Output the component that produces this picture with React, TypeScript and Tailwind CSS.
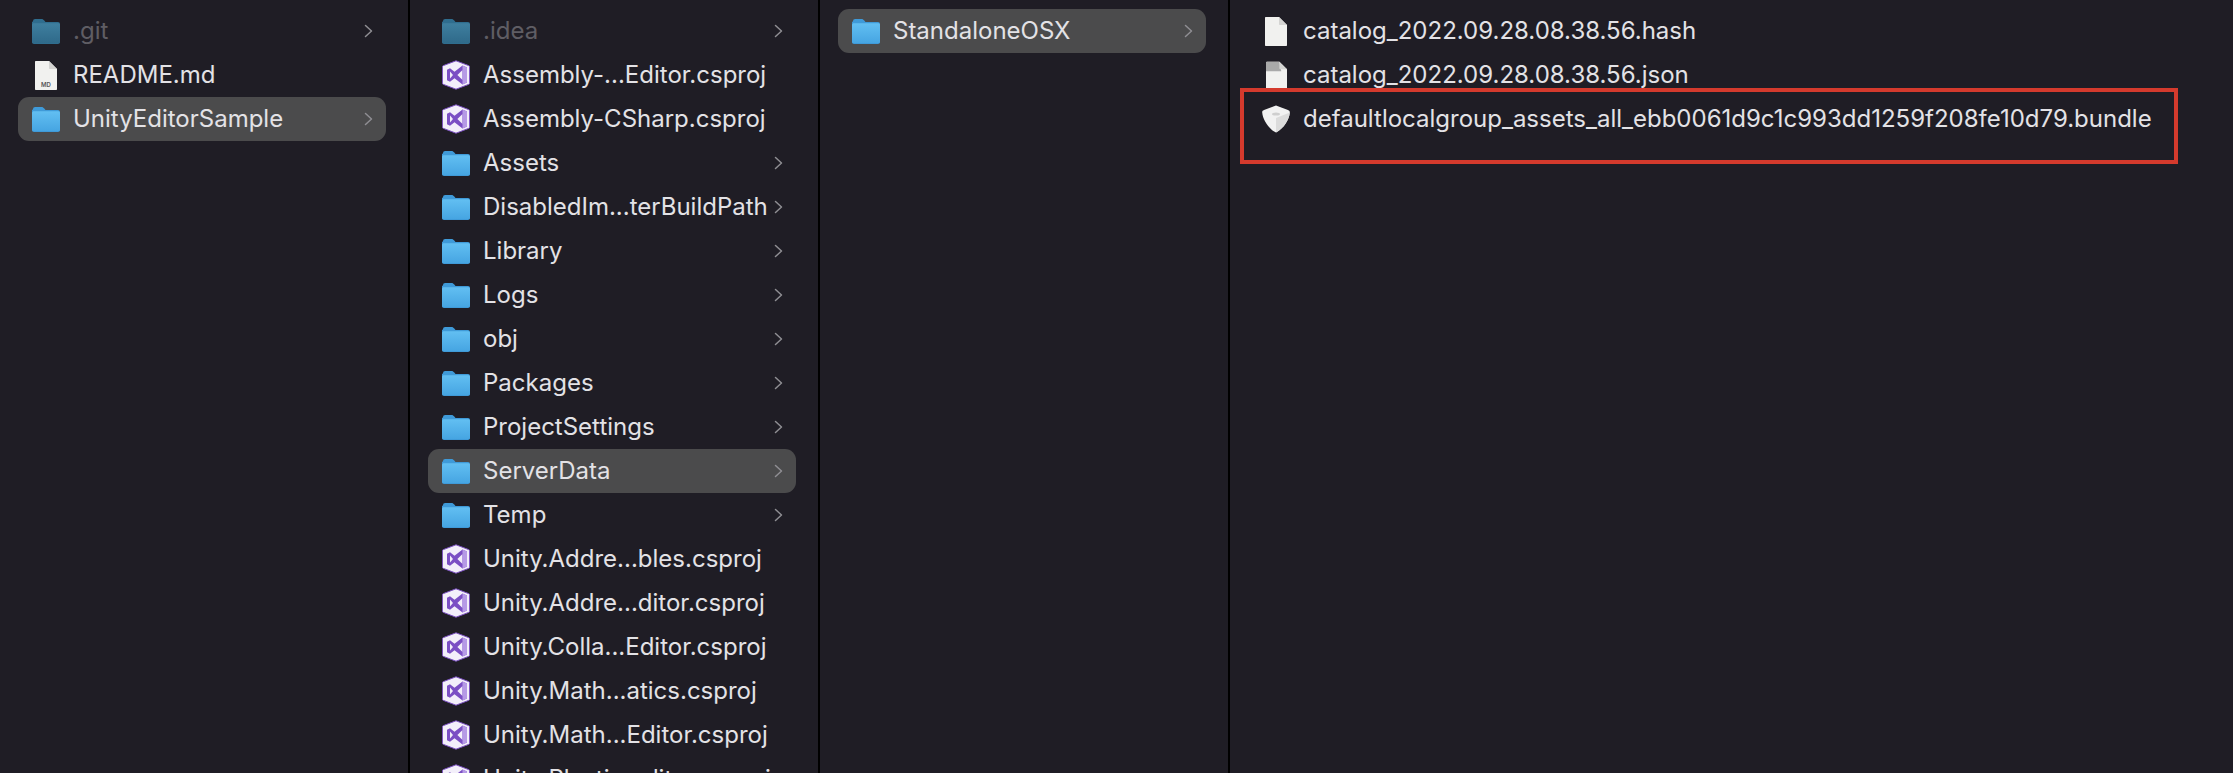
import React from "react";

type Kind = "folder" | "md" | "vs" | "doc" | "json" | "bundle";

type Item = {
  name: string;
  kind: Kind;
  dim?: boolean;
  selected?: boolean;
};

const col1: Item[] = [
  { name: ".git", kind: "folder", dim: true },
  { name: "README.md", kind: "md" },
  { name: "UnityEditorSample", kind: "folder", selected: true },
];

const col2: Item[] = [
  { name: ".idea", kind: "folder", dim: true },
  { name: "Assembly-...Editor.csproj", kind: "vs" },
  { name: "Assembly-CSharp.csproj", kind: "vs" },
  { name: "Assets", kind: "folder" },
  { name: "DisabledIm...terBuildPath", kind: "folder" },
  { name: "Library", kind: "folder" },
  { name: "Logs", kind: "folder" },
  { name: "obj", kind: "folder" },
  { name: "Packages", kind: "folder" },
  { name: "ProjectSettings", kind: "folder" },
  { name: "ServerData", kind: "folder", selected: true },
  { name: "Temp", kind: "folder" },
  { name: "Unity.Addre...bles.csproj", kind: "vs" },
  { name: "Unity.Addre...ditor.csproj", kind: "vs" },
  { name: "Unity.Colla...Editor.csproj", kind: "vs" },
  { name: "Unity.Math...atics.csproj", kind: "vs" },
  { name: "Unity.Math...Editor.csproj", kind: "vs" },
  { name: "Unity.Plastic...ditor.csproj", kind: "vs" },
];

const col3: Item[] = [{ name: "StandaloneOSX", kind: "folder", selected: true }];

const col4: Item[] = [
  { name: "catalog_2022.09.28.08.38.56.hash", kind: "doc" },
  { name: "catalog_2022.09.28.08.38.56.json", kind: "json" },
  { name: "defaultlocalgroup_assets_all_ebb0061d9c1c993dd1259f208fe10d79.bundle", kind: "bundle" },
];

function FolderIcon({ dim }: { dim?: boolean }) {
  const id = dim ? "folderDim" : "folderLit";
  return (
    <svg width={28} height={26} viewBox="0 0 28 26">
      <defs>
        <linearGradient id={id} x1="0" y1="0" x2="0" y2="1">
          <stop offset="0" stopColor={dim ? "#3f7f9f" : "#62bff2"} />
          <stop offset="1" stopColor={dim ? "#2f6a8a" : "#46a5e2"} />
        </linearGradient>
      </defs>
      <path
        d="M1 3.5C1 1.8 1.8 1 3.2 1H9.5C10.8 1 11.4 1.6 12.3 2.6L13.5 4H26C27.2 4 28 4.8 28 6V24C28 25.2 27.2 26 26 26H2C0.8 26 0 25.2 0 24V4C0 3.8 0.4 3.6 1 3.5Z"
        fill={dim ? "#2f6d8e" : "#3f9ad8"}
      />
      <path
        d="M0 7C0 5.8 0.8 5.2 2 5.2H26C27.2 5.2 28 5.8 28 7V23.4C28 24.4 27.2 25 26 25H2C0.8 25 0 24.4 0 23.4Z"
        fill={`url(#${id})`}
      />
    </svg>
  );
}

function PageIcon({ label, band, w }: { label?: string; band?: boolean; w: number }) {
  return (
    <svg width={w} height={29} viewBox="0 0 22 29">
      <path d="M1 0H14L22 8V28C22 28.6 21.6 29 21 29H1C0.4 29 0 28.6 0 28V1C0 0.4 0.4 0 1 0Z" fill="#f1f1ef" />
      {band && <path d="M0 1C0 0.4 0.4 0 1 0H14L16 10H0Z" fill="#a9a9a9" />}
      <path d="M14 0L22 8H15C14.4 8 14 7.6 14 7Z" fill="#d4d4d2" />
      {label && (
        <text x="11" y="26" textAnchor="middle" fontSize="6" fontWeight="600" fill="#555" fontFamily="Inter, sans-serif">
          {label}
        </text>
      )}
    </svg>
  );
}

function VsIcon() {
  return (
    <svg width={28} height={30} viewBox="0 0 28 30">
      <path d="M14 0.8L26.6 5.6C27.3 5.9 27.6 6.4 27.6 7.1V22.9C27.6 23.6 27.3 24.1 26.6 24.4L14 29.2L1.4 24.4C0.7 24.1 0.4 23.6 0.4 22.9V7.1C0.4 6.4 0.7 5.9 1.4 5.6Z" fill="#f3effa" stroke="#7a4fc0" strokeWidth="1" />
      <path d="M20.5 5.5L25 7.5V22.5L20.5 24.5L12.5 18.3L8 21.8L5 20.2V9.8L8 8.2L12.5 11.7Z" fill="#7b4fc4" />
      <path d="M8 11.5V18.5L11 15Z" fill="#f3effa" />
      <path d="M20.5 10L15.4 15L20.5 20Z" fill="#f3effa" />
      <path d="M20.5 5.5L25 7.5V22.5L20.5 24.5Z" fill="#b69ae6" />
    </svg>
  );
}

function BundleIcon() {
  return (
    <svg width={28} height={28} viewBox="0 0 28 28">
      <path d="M14 0.5L26 5C27.2 5.5 28 6.3 27.8 7.6C27.2 14.5 22 23.5 14 27.5C6 23.5 0.8 14.5 0.2 7.6C0 6.3 0.8 5.5 2 5Z" fill="#f2f2f2" />
      <path d="M14 13L27.8 7.6C27.2 14.5 22 23.5 14 27.5Z" fill="#dcdcdc" />
      <ellipse cx="14" cy="9" rx="4" ry="1.6" fill="#cfcfcf" />
    </svg>
  );
}

function RowIcon({ kind, dim }: { kind: Kind; dim?: boolean }) {
  if (kind === "folder") return <FolderIcon dim={dim} />;
  if (kind === "md") return <PageIcon w={22} label="MD" />;
  if (kind === "vs") return <VsIcon />;
  if (kind === "doc") return <PageIcon w={24} />;
  if (kind === "json") return <PageIcon w={21} band />;
  return <BundleIcon />;
}

function Chevron() {
  return (
    <svg width={9} height={14} viewBox="0 0 9 14" fill="none" stroke="#8f8e93" strokeWidth="1.5" strokeLinecap="round" strokeLinejoin="round">
      <path d="M1.5 1.5L7.5 7L1.5 12.5" />
    </svg>
  );
}

function Row({ item }: { item: Item }) {
  const hasChevron = item.kind === "folder";
  return (
    <div className={`flex h-11 shrink-0 items-center rounded-[11px] pl-[14px] pr-[13px] ${item.selected ? "bg-[#4b4b4c]" : ""}`}>
      <div className="flex w-[28px] shrink-0 items-center justify-center">
        <RowIcon kind={item.kind} dim={item.dim} />
      </div>
      <span className={`ml-[13px] flex-1 whitespace-nowrap text-[24px] leading-none ${item.dim ? "text-[#5f5d64]" : "text-[#e3e2e6]"}`}>
        {item.name}
      </span>
      {hasChevron && <Chevron />}
    </div>
  );
}

function Column({ items, last }: { items: Item[]; last?: boolean }) {
  return (
    <div className={`flex h-full flex-col overflow-hidden pl-[18px] pt-[9px] ${last ? "flex-1" : "w-[410px] shrink-0 border-r-2 border-black pr-[22px]"}`}>
      {items.map((item) => (
        <Row key={item.name} item={item} />
      ))}
    </div>
  );
}

export default function App() {
  return (
    <div className="relative flex h-screen w-full overflow-hidden bg-[#1f1d25] font-['Inter',sans-serif]">
      <Column items={col1} />
      <Column items={col2} />
      <Column items={col3} />
      <Column items={col4} last />
      {/* red annotation box on top of the screenshot */}
      <div className="absolute left-[1240px] top-[88px] h-[76px] w-[938px] border-[4px] border-[#d43a2d]" />
    </div>
  );
}
